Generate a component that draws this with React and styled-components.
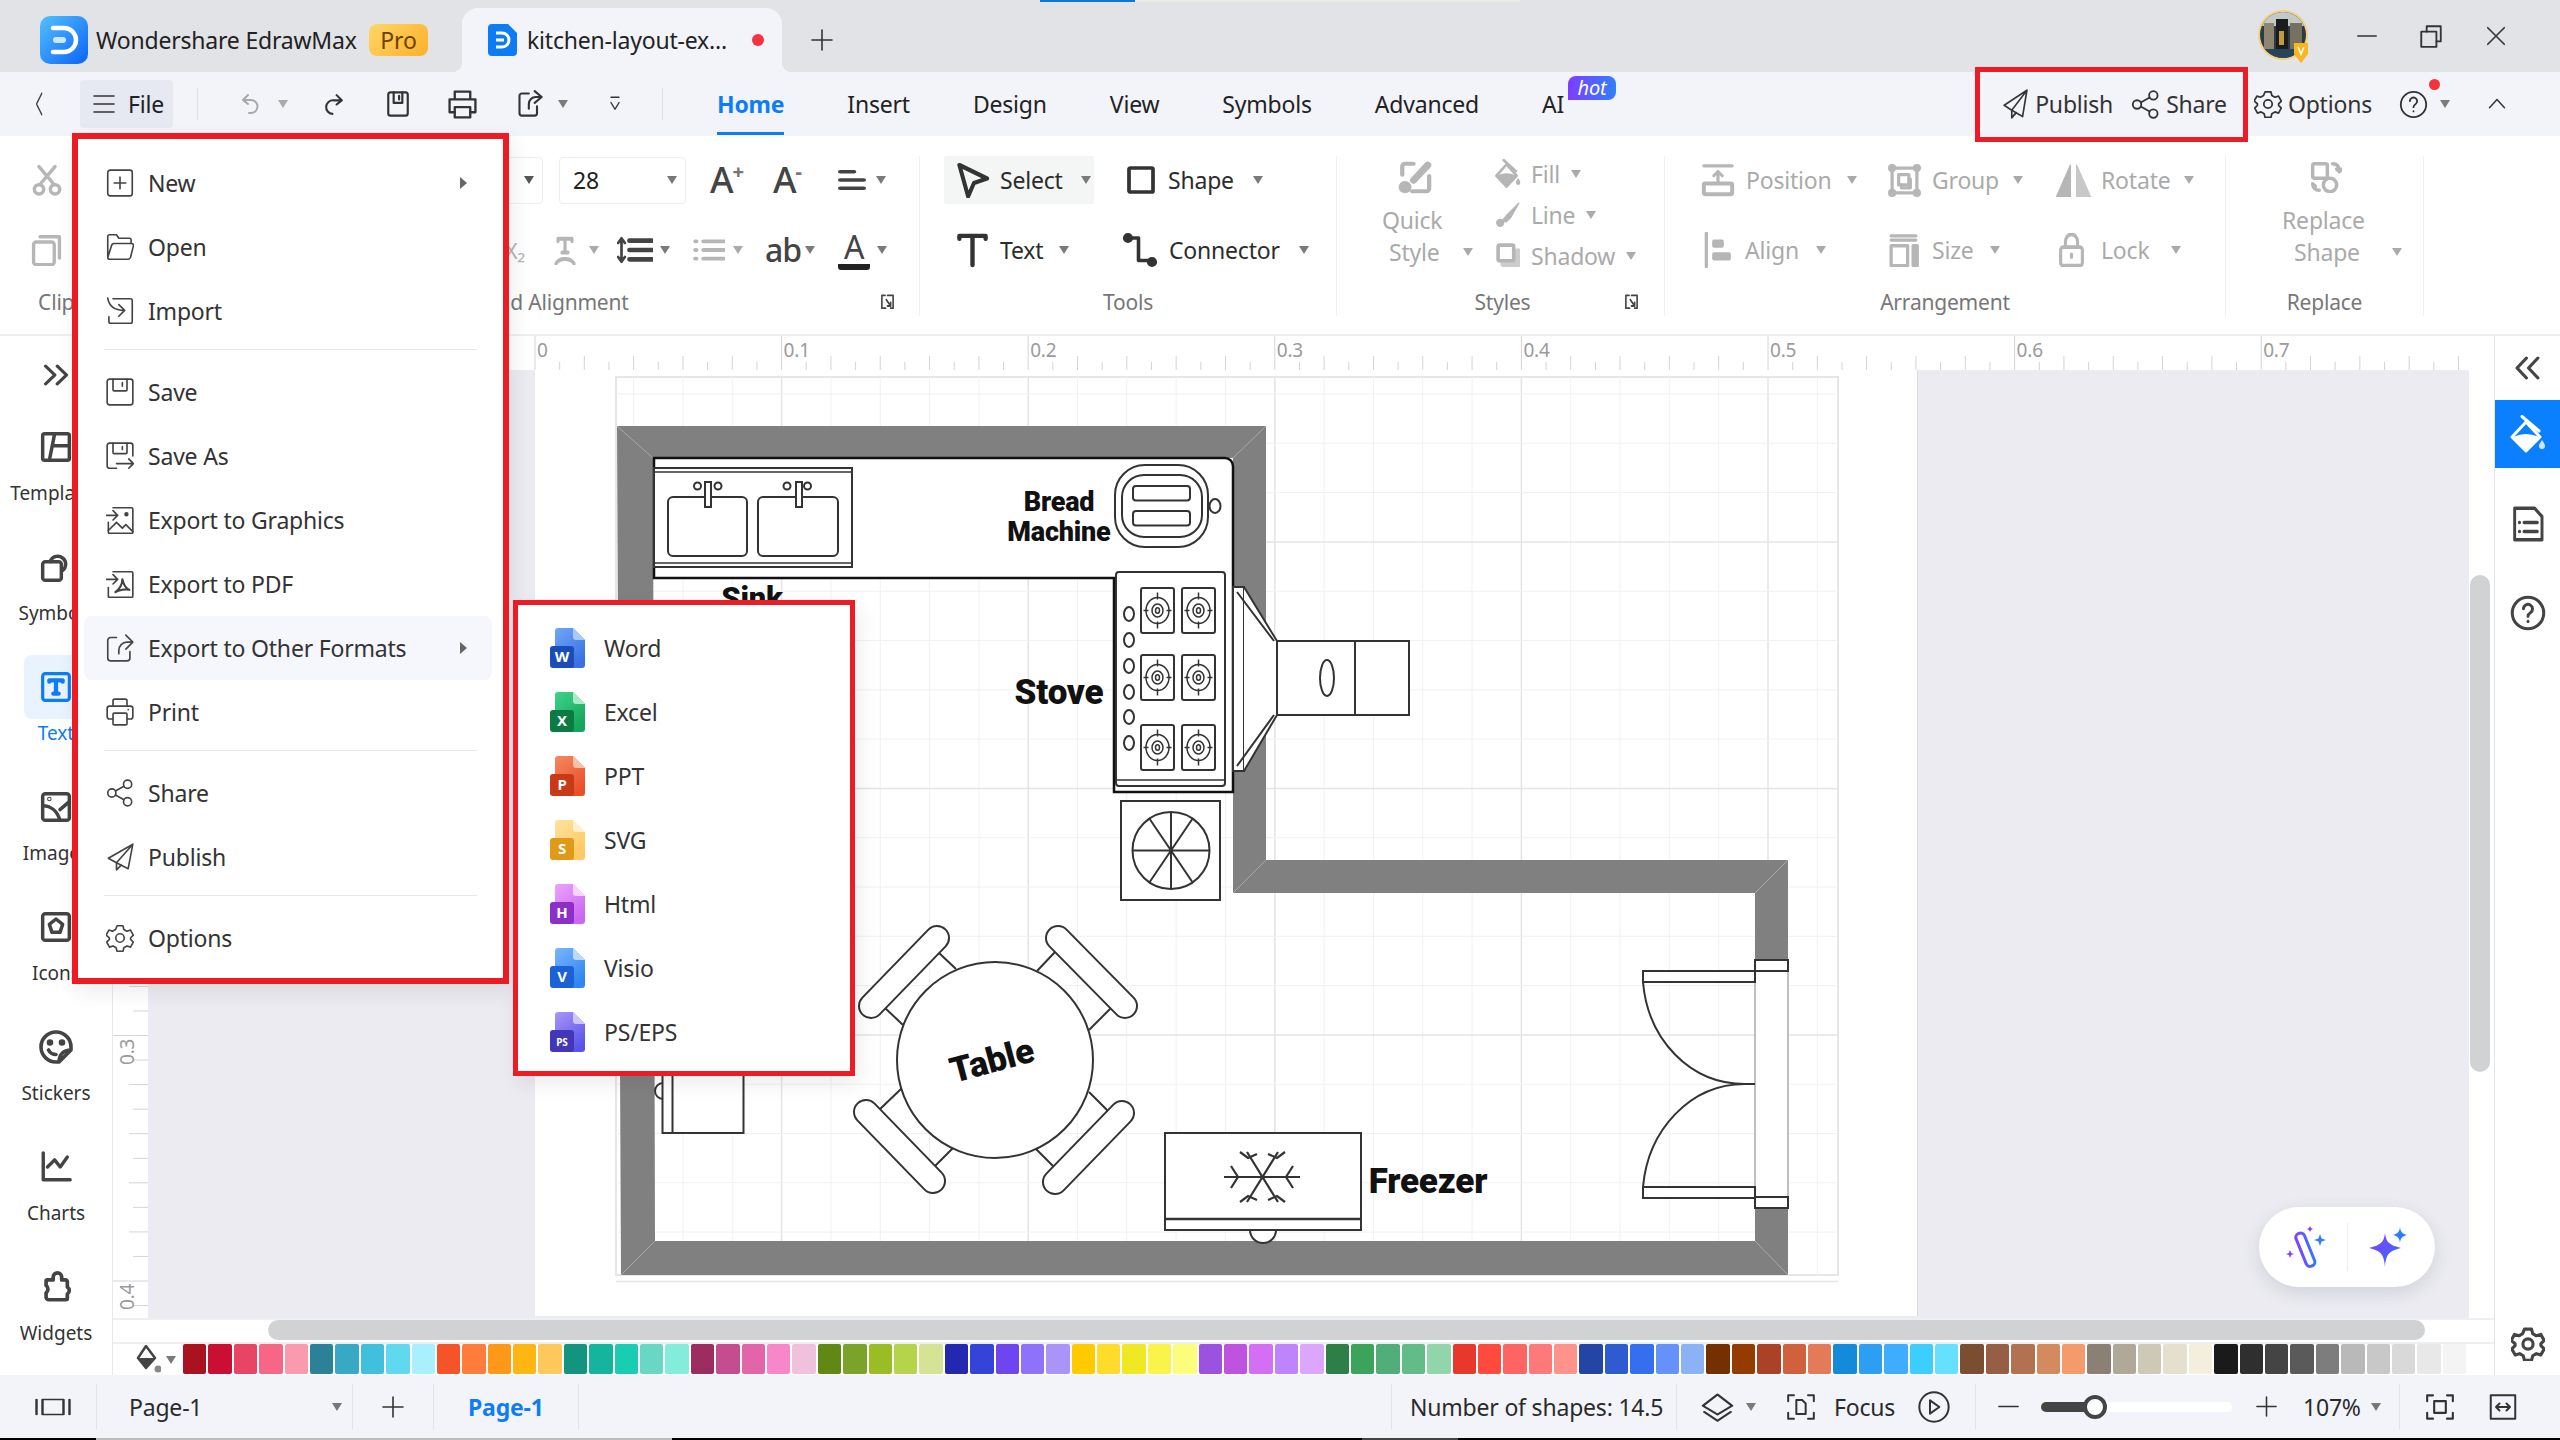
import React from 'react';
import styled, { createGlobalStyle } from 'styled-components';

const Global = createGlobalStyle`
  html, body { margin: 0; padding: 0; background: #fff; }
  body { font-family: "Noto Sans", "Open Sans", sans-serif; color: #333; }
  * { box-sizing: border-box; }
`;

const Root = styled.div`
  position: relative; width: 2560px; height: 1440px; overflow: hidden;
  display: flex; flex-direction: column; font-size: 23px; letter-spacing: -0.2px;
`;

const Svg = styled.svg.attrs({ fill: 'none', stroke: 'currentColor', strokeLinecap: 'round', strokeLinejoin: 'round' })`
  width: ${p => p.$w}px; height: ${p => p.$h || p.$w}px; color: ${p => p.$c || '#333'}; flex: none; display: block;
`;
const mk = (children, vb = '0 0 24 24', dsw = 1.4) => ({ s = 28, h, c, sw }) => (
  <Svg viewBox={vb} $w={s} $h={h} $c={c} strokeWidth={sw || dsw} preserveAspectRatio="none">{children}</Svg>
);

/* ---------- icons ---------- */
const IBack = mk(<path d="M15 3 6 12l9 9" />);
const IBurger = mk(<path d="M2 4h20M2 12h20M2 20h20" />);
const IUndo = mk(<path d="M10 3 5 8l5 4M5 8h8a6 6 0 0 1 0 13h-2" />);
const IRedo = mk(<path d="M14 3l5 5-5 4M19 8h-8a6 6 0 0 0-1 13" />);
const ISaveBar = mk(<g><rect x="3" y="2" width="18" height="20" rx="2" /><path d="M8 2v9h8V2M13 5v3" /></g>);
const IPrint = mk(<g><path d="M6 8V2h12v6M6 18H2V8h20v10h-4" /><rect x="6" y="14" width="12" height="8" /></g>);
const IExport = mk(<g><path d="M11 3H5a2 2 0 0 0-2 2v15a2 2 0 0 0 2 2h11a2 2 0 0 0 2-2v-6" /><path d="M16 1l6 5-6 5M22 6h-5a6 6 0 0 0-6 6v4" /></g>);
const IMore = mk(<path d="M5 3h14M5 10l7 9 7-9" />);
const IPlane = mk(<g><path d="M23 1 2 13l7 4ZM23 1l-4 21-10-5" /><path d="M9 17v6l4-4" /></g>);
const IShare = mk(<g><circle cx="5" cy="12" r="3.5" /><circle cx="18.500" cy="4.500" r="3.500" /><circle cx="18.500" cy="19.500" r="3.500" /><path d="M8.100 10.300 15.400 6.200M8.100 13.700l7.300 4.100" /></g>);
const IGear = mk(<g><circle cx="12" cy="12" r="3.600" /><path d="M9.500 1.500h5l.8 3.200 2.600 1.500 3.100-1 2.400 4.300-2.300 2.300v1.400l2.300 2.300-2.400 4.300-3.100-1-2.600 1.500-.8 3.200h-5l-.8-3.200-2.600-1.500-3.100 1-2.400-4.300 2.300-2.300v-1.400L.1 9.500l2.400-4.300 3.100 1 2.600-1.500Z" /></g>);
const IHelp = mk(<g><circle cx="12" cy="12" r="10.500" /><path d="M9 9.200a3 3 0 1 1 4.600 2.600c-1 .6-1.600 1.200-1.600 2.400M12 17.500v.2" /></g>);
const IUp = mk(<path d="M3 17 12 6l9 11" />);
const IMin = mk(<path d="M2 12h20" />);
const IRestore = mk(<g><rect x="3" y="8" width="14" height="14" /><path d="M8 8V3h13v14h-4" /></g>);
const IX = mk(<path d="M3 3l18 18M21 3 3 21" />);
const IPlus = mk(<path d="M12 2v20M2 12h20" />);
const ITabPlus = IPlus;

const MNew = mk(<g><rect x="1.500" y="1" width="21" height="22" rx="2" /><path d="M12 7v10M7 12h10" /></g>);
const MOpen = mk(<path d="M1.500 21V3A1.500 1.500 0 0 1 3 1.500h6l2 3h9A1.500 1.500 0 0 1 21.500 6v3M1.500 21c0 1 1 1.500 2 1.500H19c1 0 1.500-.5 2-1.500l2.500-10c.2-1-.3-2-1.500-2H7c-1 0-2 .5-2.300 2Z" />);
const MImport = mk(<g><path d="M6 1.500h15A1.500 1.500 0 0 1 22.500 3v18a1.500 1.500 0 0 1-1.500 1.500H4A1.500 1.500 0 0 1 2.500 21v-4" /><path d="M1.500 1c1 6 5 10.500 14 10.500M11 6.500l5 5-5 5" /></g>);
const MSave = mk(<g><rect x="1" y="1" width="22" height="22" rx="2" /><path d="M6 1v9a1 1 0 0 0 1 1h10a1 1 0 0 0 1-1V1M14 4v3" /></g>);
const MSaveAs = mk(<g><path d="M9 22.500H3a2 2 0 0 1-2-2V3a2 2 0 0 1 2-2h18a2 2 0 0 1 2 2v9" /><path d="M6 1v8a1 1 0 0 0 1 1h10a1 1 0 0 0 1-1V1M14 4v2.500M9 18.500h14.500m-4-4 4 4-4 4" /></g>);
const MGraph = mk(<g><path d="M6 1.500h16a1 1 0 0 1 1 1v20a1 1 0 0 1-1 1H3a1 1 0 0 1-1-1V14" /><path d="M2 21l7-7 5 5 3-3 6 6" /><circle cx="17.500" cy="7" r="1.200" fill="currentColor" /><path d="M0 8h10M6 4l4 4-4 4" /></g>);
const MPdf = mk(<g><path d="M6 1.500h16a1 1 0 0 1 1 1v20a1 1 0 0 1-1 1H3a1 1 0 0 1-1-1V15" /><path d="M0 8h10M6 4l4 4-4 4" /><path d="M14 8c0 4-2 8-6 11 3-2 9-3 12-2-3-1-5-5-6-9Z" strokeWidth="1.800" /></g>);
const MOther = mk(<g><path d="M9 3H4a2.500 2.500 0 0 0-2.500 2.500v15A2.500 2.500 0 0 0 4 23h14a2.500 2.500 0 0 0 2.500-2.500V15" /><path d="M17 1l6 6-6 6M23 7h-5a7 7 0 0 0-7 7v3" /></g>);
const MPrint = mk(<g><path d="M6 7V2.500A1.500 1.500 0 0 1 7.500 1h9A1.500 1.500 0 0 1 18 2.500V7M6 18H3a2 2 0 0 1-2-2V9a2 2 0 0 1 2-2h18a2 2 0 0 1 2 2v7a2 2 0 0 1-2 2h-3" /><rect x="6" y="13" width="12" height="10" rx="1" /><path d="M19 10h.1" /></g>);

/* sidebar */
const STemplate = mk(<g><rect x="2" y="2" width="20" height="20" rx="1.500" /><path d="M11 2 7 22M10 11h12" /></g>, '0 0 24 24', 2.600);
const SSymbol = mk(<g><rect x="2" y="8" width="14" height="14" rx="2" /><path d="M8 8V7a6 6 0 1 1 9 7.600" /></g>, '0 0 24 24', 2.600);
const SText = mk(<g><rect x="2" y="2" width="20" height="20" rx="2" /><path d="M7 8V7h10v1M12 7v10M10 17h4" strokeWidth="3.200" /></g>, '0 0 24 24', 2.400);
const SImage = mk(<g><rect x="2" y="2" width="20" height="20" rx="2" /><path d="M2 11c6 0 11 4 13 11M22 8l-7 6" /><circle cx="7" cy="6" r=".4" /></g>, '0 0 24 24', 2.600);
const SIcons = mk(<g><rect x="2" y="2" width="20" height="20" rx="2" /><path d="m12 6 5 4-2 6H9l-2-6Z" /></g>, '0 0 24 24', 2.600);
const SStickers = mk(<g><path d="M14 22H12A10 10 0 1 1 22 12v2Zm0 0c0-5 3-8 8-8" /><circle cx="8" cy="9" r="1" fill="currentColor" /><circle cx="16" cy="9" r="1" fill="currentColor" /><path d="M7 14c1 2 3 3 5 3" /></g>, '0 0 24 24', 2.400);
const SCharts = mk(<path d="M3 2v19h19M6 12l5-5 4 5 5-7" />, '0 0 24 24', 2.400);
const SWidgets = mk(<path d="M10 5a3 3 0 0 1 6 0v2h3a2 2 0 0 1 1 2v3a3 3 0 0 1 0 5v3a1 1 0 0 1-1 1H7a2 2 0 0 1-2-2v-3a3 3 0 0 0 0-5V8a1 1 0 0 1 1-1h4Z" />, '0 0 24 24', 2.600);
const SChevrons = mk(<path d="M3 3l8 9-8 9M13 3l8 9-8 9" />, '0 0 24 24', 2.800);
const SLeftChev = mk(<path d="M11 2 2 12l9 10M22 2l-9 10 9 10" />, '0 0 24 24', 3);
const SDoc = mk(<g><path d="M2 1.500h15l5.500 5.500v15.500H2Z" /><path d="M9 11h10M9 17h10M5.500 11h.2M5.500 17h.2" /></g>, '0 0 24 24', 2.200);
const bucket = (
  <g>
    <path d="M12 1.500 29 16" />
    <path d="M16 7 2 22l14 14 14-14Z" />
    <path d="M4.500 23c7-3 16-3 23 0L16 35Z" fill="currentColor" />
  </g>
);
const SFill = mk(<g>{bucket}<path d="M32 25c-2 3-3 4-3 6a3 3 0 0 0 6 0c0-2-1-3-3-6Z" fill="#cfe4ff" stroke="none" /></g>, '0 0 36 38', 3);

/* ribbon */
const RCut = mk(<g><circle cx="6" cy="19" r="3.500" /><circle cx="18" cy="19" r="3.500" /><path d="M7 15 18 2M17 15 6 2" /></g>, '0 0 24 24', 2.600);
const RCopy = mk(<g><rect x="2" y="6" width="16" height="17" rx="2" /><path d="M7 2h15v16" /></g>, '0 0 24 24', 2.600);
const RAlign = mk(<path d="M2 3h13M2 12h22M2 21h22" />, '0 0 26 24', 4);
const RSpacing = mk(<g><path d="M11 4h20M11 12h20M11 20h20" strokeWidth="4" /><path d="M4 2v20M1 6l3-4 3 4M1 18l3 4 3-4" strokeWidth="2.400" /></g>, '0 0 32 24', 3);
const RList = mk(<path d="M9 4h18M9 12h18M9 20h18M2 4h1M2 12h1M2 20h1" />, '0 0 28 24', 3.600);
const RTArc = mk(<path d="M5 3h14M5 3v2M19 3v2M12 3v11M9 14h6M3 23c3-5 15-5 18 0" />, '0 0 24 24', 3.200);
const RSelect = mk(<path d="M3 2 22 11l-9 3-4 9Z" />, '0 0 24 24', 2.800);
const RShape = mk(<rect x="3" y="3" width="18" height="18" rx="1" />, '0 0 24 24', 2.800);
const RText = mk(<path d="M3 4V2h18v2M12 2v20" />, '0 0 24 24', 3);
const RConnector = mk(<g><path d="M5 4h6v15h8" /><circle cx="4" cy="4" r="2.200" fill="currentColor" /><circle cx="20" cy="20" r="2.200" fill="currentColor" /></g>, '0 0 24 24', 2.400);
const RQuick = mk(<g><path d="M11 2H5a2 2 0 0 0-2 2v6M22 11v9a2 2 0 0 1-2 2H10" strokeWidth="3" /><path d="M21 3 11 14" strokeWidth="5" /><circle cx="5" cy="19" r="4.500" fill="currentColor" stroke="none" /></g>, '0 0 24 24', 2.400);
const RFill = mk(<g>{bucket}<path d="M32 25c-2 3-3 4-3 6a3 3 0 0 0 6 0c0-2-1-3-3-6Z" fill="currentColor" stroke="none" /></g>, '0 0 36 38', 3.600);
const RLine = mk(<g><path d="M23 1 11 13l-4 5 4 1 4-4Z" fill="currentColor" /><circle cx="5" cy="20" r="4" fill="currentColor" stroke="none" /></g>, '0 0 24 24', 1.200);
const RShadow = mk(<g><path d="M8 20h14V8" strokeWidth="6" opacity=".7" /><rect x="3" y="2" width="15" height="15" rx="1.500" fill="#fff" strokeWidth="3.500" /></g>, '0 0 24 24', 2.400);
const RPosition = mk(<g><path d="M2 2h20" /><path d="M12 14V6M9 9l3-3 3 3" /><path d="M12 14v0" /><rect x="2" y="14.500" width="20" height="7.500" rx="1" strokeWidth="2.800" /></g>, '0 0 24 24', 2.200);
const RGroup = mk(<g><rect x="3.500" y="3.500" width="17" height="17" /><rect x="8" y="8" width="7" height="7" /><path d="M10 15v2h6v-6h-1" /><circle cx="3.500" cy="3.500" r="1.700" fill="currentColor" /><circle cx="20.500" cy="3.500" r="1.700" fill="currentColor" /><circle cx="3.500" cy="20.500" r="1.700" fill="currentColor" /><circle cx="20.500" cy="20.500" r="1.700" fill="currentColor" /></g>, '0 0 24 24', 2.200);
const RRotate = mk(<g><path d="M10 2v21H1Z" fill="currentColor" /><path d="M14 2v21h9Z" fill="currentColor" opacity=".75" /></g>, '0 0 24 24', .8);
const RAlignL = mk(<g><path d="M2 1v22" strokeWidth="2.800" /><rect x="7" y="5" width="10" height="5.500" rx="1.500" fill="currentColor" stroke="none" /><rect x="7" y="13.500" width="16" height="5.500" rx="1.500" fill="currentColor" stroke="none" /></g>, '0 0 24 24', 2.200);
const RSize = mk(<g><path d="M3 2h18M3 5h18" /><rect x="3" y="9" width="12" height="14" /><rect x="19" y="9" width="3" height="14" fill="currentColor" /></g>, '0 0 24 24', 2.400);
const RLock = mk(<g><rect x="3" y="10" width="18" height="13" rx="2" /><path d="M7 10V6a5 5 0 0 1 10 0v4M12 15v2" /></g>, '0 0 24 24', 2.600);
const RReplace = mk(<g><rect x="2" y="2" width="11" height="11" rx="1.500" /><circle cx="15" cy="18" r="5" /><path d="M17 2c3 0 5 2 5 6l-2-2M22 8l2-2M7 22c-3 0-5-2-5-5l2 2" /></g>, '0 0 24 24', 2.600);
const RLaunch = mk(<path d="M8 2H3v18h6M12 2h9v18h-4M10 8l7 9M17 12v5h-5" />, '0 0 24 24', 2.400);

/* status */
const TPanel = mk(<g><rect x="5" y="3" width="14" height="18" /><path d="M1 3v18M23 3v18" /></g>, '0 0 24 24', 1.600);
const TLayers = mk(<g><path d="M12 2 22 11l-10 7L2 11Z" /><path d="M3 16l9 7 9-7" /></g>, '0 0 24 24', 1.700);
const TFocus = mk(<g><path d="M6 2H1v5M18 2h5v5M6 22H1v-5M18 22h5v-5" /><path d="M8 6h5l3 3v9H8Z" /></g>, '0 0 24 24', 1.700);
const TPlay = mk(<g><circle cx="12" cy="12" r="11" /><path d="M9 7l7 5-7 5Z" /></g>, '0 0 24 24', 1.500);
const TFit = mk(<g><path d="M6 2H1v5M18 2h5v5M6 22H1v-5M18 22h5v-5" /><rect x="7" y="7" width="10" height="10" /></g>, '0 0 24 24', 1.800);
const TWidth = mk(<g><rect x="1.500" y="2" width="21" height="20" /><path d="M6 12h12M9 9l-3 3 3 3M15 9l3 3-3 3" /></g>, '0 0 24 24', 1.700);

/* ---------- shared ---------- */
const Caret = styled.i`
  display: block; flex: none; width: 0; height: 0; margin-left: ${p => p.$ml || 0}px;
  border-left: 5px solid transparent; border-right: 5px solid transparent;
  border-top: 8px solid ${p => p.$c || '#7a7a7a'};
`;
const MenuArrow = styled.i`
  display: block; flex: none; margin-left: auto; width: 0; height: 0;
  border-top: 6px solid transparent; border-bottom: 6px solid transparent; border-left: 7px solid #666;
`;

/* ---------- title bar ---------- */
const TitleBar = styled.header`
  position: relative; height: 72px; background: #e1e3e6; display: flex; align-items: center; padding: 8px 0 0 40px; flex: none;
`;
const Loader = styled.div`
  position: absolute; top: 0; left: 1040px; width: 95px; height: 2px; background: #0a78d6;
`;
const LoaderRest = styled.div`
  position: absolute; top: 0; left: 1135px; width: 385px; height: 2px; background: #ebebe6;
`;
const AppName = styled.span`margin-left: 8px; width: 257px; flex: none; color: #222; white-space: nowrap;`;
const ProBadge = styled.span`
  margin-left: 16px; width: 59px; height: 32px; border-radius: 8px; display: flex; align-items: center; justify-content: center; flex: none;
  background: linear-gradient(135deg, #ffd667, #ffb02a); color: #6b4300;
`;
const ActiveTab = styled.div`
  position: relative; margin-left: 34px; width: 320px; height: 64px; align-self: flex-end; background: #f2f4fa; flex: none;
  border-radius: 16px 16px 0 0; display: flex; align-items: center; padding-left: 26px;
  &::before, &::after { content: ''; position: absolute; bottom: 0; width: 10px; height: 10px; }
  &::before { left: -10px; background: radial-gradient(circle at 0 0, transparent 10px, #f2f4fa 10.5px); }
  &::after { right: -10px; background: radial-gradient(circle at 100% 0, transparent 10px, #f2f4fa 10.5px); }
`;
const TabName = styled.span`margin-left: 10px; width: 225px; color: #222; white-space: nowrap;`;
const TabDot = styled.span`width: 12px; height: 12px; border-radius: 50%; background: #f5333f;`;
const NewTab = styled.div`margin-left: 28px; display: flex; align-items: center;`;
const WindowTools = styled.div`margin-left: auto; display: flex; align-items: center; padding-right: 53px; margin-top: -8px;`;
const WinBtn = styled.div`margin-left: ${p => p.$ml}px; display: flex;`;

const LogoMark = () => (
  <svg width="48" height="48" viewBox="0 0 48 48" style={{ flex: 'none' }}>
    <defs><linearGradient id="lg" x1="0" y1="0" x2="1" y2="1"><stop offset="0" stopColor="#53c0ff" /><stop offset="1" stopColor="#0b63f6" /></linearGradient></defs>
    <rect width="48" height="48" rx="10" fill="url(#lg)" />
    <path d="M13 12h11a12 12 0 0 1 0 24H13" fill="none" stroke="#fff" strokeWidth="4.500" strokeLinecap="round" />
    <rect x="13" y="21" width="13" height="6" rx="3" fill="#cfe6ff" />
  </svg>
);
const TabLogo = () => (
  <svg width="29" height="32" viewBox="0 0 29 32" style={{ flex: 'none' }}>
    <path d="M4 0h16l9 9v19a4 4 0 0 1-4 4H4a4 4 0 0 1-4-4V4a4 4 0 0 1 4-4Z" fill="#0d7bf4" />
    <path d="M8 9h6a7 7 0 0 1 0 14H8" fill="none" stroke="#fff" strokeWidth="3" />
    <rect x="8" y="14.500" width="8" height="3" fill="#fff" />
  </svg>
);
const Avatar = () => (
  <svg width="52" height="54" viewBox="0 0 52 54" style={{ flex: 'none' }}>
    <defs><clipPath id="av"><circle cx="25" cy="26" r="23" /></clipPath></defs>
    <circle cx="25" cy="26" r="25" fill="#f5cf7a" />
    <g clipPath="url(#av)">
      <rect width="52" height="54" fill="#2c3a44" />
      <rect x="0" y="3" width="50" height="14" fill="#c3c8c8" />
      <rect x="6" y="14" width="10" height="26" fill="#8f8672" />
      <rect x="32" y="14" width="12" height="26" fill="#75705f" />
      <rect x="18" y="10" width="12" height="32" fill="#1b1d1c" />
      <rect x="21" y="22" width="5" height="14" fill="#c79b3d" />
      <rect x="0" y="40" width="50" height="12" fill="#29445a" />
    </g>
    <path d="M36 34h14v11l-7 9-7-9Z" fill="#f9b61e" />
    <path d="M40 38l3 7 3-7" fill="none" stroke="#fff" strokeWidth="1.600" />
  </svg>
);

/* ---------- menu bar ---------- */
const MenuBar = styled.nav`
  position: relative; height: 64px; background: #f2f4fa; display: flex; align-items: center; flex: none;
`;
const BarIcon = styled.div`display: flex; align-items: center; margin-left: ${p => p.$ml || 0}px;`;
const FileBtn = styled.div`
  margin-left: 33px; width: 93px; height: 48px; border-radius: 4px; background: #e6e9f2;
  display: flex; align-items: center; padding-left: 12px; gap: 12px; color: #222;
`;
const VSep = styled.span`
  flex: none; width: 1px; height: ${p => p.$h || 32}px; background: #dcdfe8; margin-left: ${p => p.$ml || 0}px;
`;
const Tabs = styled.div`display: flex; gap: 63px; margin-left: 54px; height: 100%;`;
const TabItem = styled.div`
  position: relative; height: 100%; display: flex; align-items: center; color: ${p => p.$on ? '#0e7cf6' : '#222'};
  font-weight: ${p => p.$on ? 700 : 400};
  ${p => p.$on && `&::after { content: ''; position: absolute; left: 0; right: 0; bottom: 1px; height: 3px; background: #0e7cf6; }`}
`;
const HotBadge = styled.span`
  position: absolute; left: 26px; top: 4px; width: 48px; height: 24px; border-radius: 8px 8px 8px 0;
  background: linear-gradient(90deg, #7e3cff, #2f80ff); color: #fff; font-size: 20px; font-style: italic;
  display: flex; align-items: center; justify-content: center; line-height: 1;
`;
const MenuRight = styled.div`margin-left: auto; display: flex; align-items: center; padding-right: 53px; color: #333;`;
const RightTool = styled.div`display: flex; align-items: center; gap: ${p => p.$gap || 6}px; margin-left: ${p => p.$ml || 0}px;`;
const HelpWrap = styled.div`position: relative; display: flex; align-items: center; gap: 12px; margin-left: 27px;`;
const HelpDot = styled.span`position: absolute; left: 30px; top: -11px; width: 11px; height: 11px; border-radius: 50%; background: #f5333f;`;

const RedBox = styled.div`
  position: absolute; border: 5px solid #ed1c24; left: ${p => p.$l}px; top: ${p => p.$t}px; width: ${p => p.$w}px; height: ${p => p.$h}px;
  pointer-events: none;
`;

/* ---------- ribbon ---------- */
const Ribbon = styled.section`
  height: 200px; background: #fff; display: flex; padding-top: 20px; border-bottom: 2px solid #eeeff2; flex: none;
`;
const Group = styled.div`
  width: ${p => p.$w}px; height: 160px; border-right: 1px solid #eff0f3; flex: none; display: flex; flex-direction: column;
`;
const GroupBody = styled.div`
  height: 126px; padding-left: ${p => p.$pl || 0}px; display: ${p => p.$grid ? 'grid' : 'block'};
  grid-template-columns: ${p => p.$cols || 'none'}; grid-auto-rows: 48px; row-gap: 22px; align-items: center;
  column-gap: ${p => p.$cg || 0}px;
`;
const GroupFoot = styled.div`
  flex: 1; display: grid; grid-template-columns: 1fr auto 1fr; align-items: center; color: #777; font-size: 21px;
  padding: 6px ${p => p.$pr || 0}px 0 ${p => p.$pl || 0}px;
`;
const FootLabel = styled.span`grid-column: 2; white-space: nowrap; line-height: 1;`;
const FootAction = styled.span`grid-column: 3; justify-self: end; display: flex;`;
const Cell = styled.div`
  display: flex; align-items: center; height: 48px; gap: ${p => p.$gap || 11}px; padding-left: ${p => p.$pl || 0}px;
  color: ${p => p.$off ? '#aaa' : '#2c2c2c'}; background: ${p => p.$bg || 'transparent'}; border-radius: 3px;
  white-space: nowrap;
`;
const FontRow = styled.div`display: flex; align-items: center; height: 48px; margin-bottom: 22px;`;
const Slot = styled.div`display: flex; align-items: center; flex: none; margin-left: ${p => p.$ml || 0}px;`;
const FieldBox = styled.div`
  width: ${p => p.$w}px; height: 47px; flex: none; margin-left: ${p => p.$ml || 0}px; border: 1px solid #eceef1; border-radius: 4px;
  display: flex; align-items: center; padding: 0 8px 0 13px; justify-content: space-between; color: #222;
`;
const BumpA = styled.span`font-size: 36px; font-weight: 500; line-height: 1; color: #444; display: flex; width: 32px;`;
const BumpSign = styled.span`font-size: 20px; line-height: 1; font-weight: 800; color: #777; margin-left: -1px;`;
const AbText = styled.span`font-size: 32px; font-weight: 500; line-height: 1; letter-spacing: -1px; width: 33px; color: #444;`;
const ColorA = styled.span`font-size: 32px; line-height: 34px; width: 32px; text-align: center; border-bottom: 6px solid #222; border-radius: 3px; color: #444;`;
const SubX = styled.span`font-size: 22px; color: #b5b5b5; width: 50px; text-align: right; margin-left: -35px;`;
const QuickCol = styled.div`width: ${p => p.$w || 158}px; padding-left: ${p => p.$pl ?? 33}px; padding-top: 5px; height: 126px; flex: none; display: flex; flex-direction: column; color: #aaa;`;
const QuickIcon = styled.div`padding-left: ${p => p.$pl || 28}px; margin-bottom: 6px; height: 37px;`;
const QuickLine = styled.div`
  display: flex; align-items: center; line-height: 32px; padding-left: ${p => p.$pl || 0}px; gap: ${p => p.$gap || 0}px;
`;
const StyleRow = styled.div`display: flex; align-items: center; height: 41px; gap: 11px; color: #aaa;`;
const StyleIcons = styled.div`width: 25px; display: flex; justify-content: center;`;
const StyleColumn = styled.div`margin-top: -3px;`;
const StylesBody = styled.div`height: 126px; display: flex;`;

/* ---------- main ---------- */
const Main = styled.main`flex: 1; display: flex; min-height: 0;`;
const SideBar = styled.aside`width: 113px; flex: none; background: #fff; border-right: 1px solid #e8e8ec; display: flex; flex-direction: column;`;
const SideTop = styled.div`height: 80px; display: flex; align-items: center; justify-content: center; padding-bottom: 2px;`;
const SideItem = styled.div`
  height: 120px; display: flex; flex-direction: column; align-items: center; flex: none; font-size: 19px; letter-spacing: 0;
  color: ${p => p.$on ? '#0e7cf6' : '#333'};
`;
const SideTile = styled.div`
  width: 64px; height: 64px; border-radius: 8px; background: ${p => p.$on ? '#e9f3fe' : 'transparent'};
  display: flex; align-items: center; justify-content: center;
`;
const SideLabel = styled.span`line-height: 28px; white-space: nowrap;`;

const Center = styled.div`flex: 1; min-width: 0; display: flex; flex-direction: column;`;
const TopRuler = styled.div`height: 34px; flex: none; background: #fff; display: flex; padding-left: 35px;`;
const CanvasRow = styled.div`height: 948px; flex: none; display: flex; background: #ebebf1;`;
const LeftRuler = styled.div`width: 35px; flex: none; background: #fff;`;
const GrayPad = styled.div`width: ${p => p.$w}px; flex: none; position: relative;`;
const PageBox = styled.div`width: 1383px; height: 946px; flex: none; background: #fff; border-right: 1px solid #dcdce2;`;
const VScrollTrack = styled.div`width: 25px; flex: none; background: #fff; padding: 205px 4px 0 1px;`;
const VThumb = styled.div`height: 497px; border-radius: 10px; background: #d1d2d4;`;
const HScrollTrack = styled.div`height: 26px; flex: none; background: #fff; border-top: 2px solid #eeeff2; border-bottom: 2px solid #eeeff2; padding: 0 69px 0 155px;`;
const HThumb = styled.div`height: 20px; border-radius: 10px; background: #d1d2d4;`;
const ColorStrip = styled.div`flex: 1; background: #fff; display: flex; align-items: stretch; padding-left: 23px;`;
const PaintBtn = styled.div`width: 47px; flex: none; display: flex; align-items: center; gap: 5px;`;
const Swatches = styled.div`display: flex; gap: 2px; height: 30px;`;
const Swatch = styled.span`width: 23.4px; flex: none; border-radius: 2px; background: ${p => p.$c};`;

const RightPanel = styled.aside`width: 66px; flex: none; background: #fff; border-left: 1px solid #e6e6ea; display: flex; flex-direction: column; align-items: center;`;
const RightIcon = styled.div`
  width: 100%; height: ${p => p.$h}px; margin-top: ${p => p.$mt || 0}px; display: flex; align-items: center; justify-content: center; flex: none;
  background: ${p => p.$bg || 'transparent'};
`;

const FloatPill = styled.div`
  position: absolute; left: 341px; bottom: 31px; width: 176px; height: 80px; border-radius: 40px; background: #fff;
  box-shadow: 0 6px 18px rgba(60, 60, 90, .14); display: flex; align-items: center; justify-content: center; gap: 21px;
`;
const PillSep = styled.span`width: 1px; height: 48px; background: #eeeef2;`;

/* ---------- status ---------- */
const StatusBar = styled.footer`height: 63px; flex: none; background: #f2f4fa; display: flex; align-items: center; color: #2a2a2a;`;
const StatusCell = styled.div`
  width: ${p => p.$w ? p.$w + 'px' : 'auto'}; height: 46px; display: flex; align-items: center; flex: none;
  padding-left: ${p => p.$pl || 0}px; gap: ${p => p.$gap || 0}px; border-right: ${p => p.$bare ? 'none' : '1px solid #e1e3ea'};
  border-left: ${p => p.$lb ? '1px solid #e1e3ea' : 'none'};
  justify-content: ${p => p.$jc || 'flex-start'}; color: ${p => p.$c || 'inherit'}; font-weight: ${p => p.$bold ? 700 : 400};
`;
const StatusGrow = styled.div`flex: 1;`;
const SliderTrack = styled.div`position: relative; width: 191px; height: 10px; border-radius: 5px; background: #fff; margin-left: 21px; flex: none;`;
const SliderFill = styled.div`height: 100%; border-radius: 5px; background: #444;`;
const SliderKnob = styled.div`position: absolute; top: -7px; width: 24px; height: 24px; border-radius: 50%; background: #fff; border: 4px solid #444;`;
const TaskStrip = styled.div`height: 2px; flex: none; background: linear-gradient(90deg, #000 0 96px, #bdbdbd 96px 672px, #000 672px 1362px, #444 1362px 1458px, #000 1458px);`;

/* ---------- overlay menus ---------- */
const FileMenu = styled.div`
  position: absolute; left: 72px; top: 133px; width: 437px; height: 851px; background: #fff; border: 6px solid #ed1c24;
  padding: 12px 11px 0 6px; box-shadow: 4px 8px 20px rgba(0,0,0,.08);
`;
const SubMenu = styled.div`
  position: absolute; left: 513px; top: 600px; width: 342px; height: 476px; background: #fff; border: 5px solid #ed1c24;
  padding: 11px 6px 0; box-shadow: 4px 8px 20px rgba(0,0,0,.08);
`;
const MenuRow = styled.div`
  height: 64px; display: flex; align-items: center; padding: 0 ${p => p.$pr || 13}px 0 22px; gap: 14px; border-radius: 8px;
  background: ${p => p.$on ? '#f5f7fc' : 'transparent'}; color: #333;
`;
const SubRow = styled.div`height: 64px; display: flex; align-items: center; padding-left: 26px; gap: 18px; color: #333;`;
const MenuSep = styled.div`height: 17px; padding: 6px 15px 0 20px;`;
const MenuSepLine = styled.div`height: 1px; background: #e9e9ec;`;

/* ---------- data ---------- */
const colors = ['#ab1220', '#c90f33', '#e84565', '#f76685', '#f99aae', '#2a8198', '#38a9c4', '#40c0dd', '#60d9ef', '#a9effd', '#f45428', '#ff7c3a', '#ff9718', '#ffb612', '#ffc85c', '#12947f', '#15b59d', '#19cdb0', '#68d8c5', '#84ecda', '#9d2c61', '#c54c8e', '#e165a8', '#f887ca', '#f0c0dc', '#5f8814', '#7ba32a', '#9bbd24', '#b5d34b', '#d4e494', '#2228b0', '#3544d8', '#6f45f0', '#8f72fa', '#aa94f8', '#ffcb00', '#ffdc2b', '#f1e824', '#faf44a', '#fdfd7c', '#9b52de', '#c052e0', '#d36ef5', '#bf84fb', '#dba6fc', '#2e7e47', '#3ca35a', '#52ae78', '#62bc88', '#90d6aa', '#e8372b', '#ff4a3d', '#fd6464', '#fe7a7a', '#ff928a', '#2444a6', '#2f5bd0', '#356eee', '#6591fb', '#8bb1f6', '#743000', '#963b00', '#ab4228', '#d1603e', '#e47a58', '#148ada', '#2c9ff2', '#3fadff', '#3bceff', '#66e0ff', '#7b4d31', '#965e44', '#b27150', '#d48a5e', '#f59a6b', '#8b8073', '#b0a997', '#cdc9b5', '#e5dfce', '#f4eedd', '#1a1a1a', '#2f2f2f', '#444444', '#5a5a5a', '#7d7d7d', '#b9b9b9', '#c8c8c8', '#d9d9d9', '#e8e8e8', '#f4f4f4', '#ffffff'];

const tabs = ['Home', 'Insert', 'Design', 'View', 'Symbols', 'Advanced'];

const subs = [
  ['Word', 'W', '#6fa8f6', '#3b70e2', '#1b4dba', '#a9c9fa'],
  ['Excel', 'X', '#3fd48a', '#15a55c', '#0b7a43', '#aee8cb'],
  ['PPT', 'P', '#f58a60', '#ea4f2a', '#c83a17', '#f9c0a8'],
  ['SVG', 'S', '#ffe3a0', '#ffc860', '#e09a18', '#fff0cc'],
  ['Html', 'H', '#eba4fb', '#cc66f4', '#8b2fc7', '#f5d4fd'],
  ['Visio', 'V', '#7cb5ff', '#2d86f2', '#1b62d6', '#bcd9ff'],
  ['PS/EPS', 'PS', '#a996fa', '#5a55ea', '#4336b9', '#d0c6fd'],
];

const FileIcon = ({ id, letter, a, b, badge, fold }) => (
  <svg width="36" height="40" viewBox="0 0 36 40" style={{ flex: 'none' }}>
    <defs><linearGradient id={id} x1="0" y1="0" x2="0.6" y2="1"><stop offset="0" stopColor={a} /><stop offset="1" stopColor={b} /></linearGradient></defs>
    <path d="M5 3a3 3 0 0 1 3-3h15l12 12v25a3 3 0 0 1-3 3H8a3 3 0 0 1-3-3Z" fill={`url(#${id})`} />
    <path d="M23 0l12 12H26a3 3 0 0 1-3-3Z" fill={fold} />
    <rect x="0" y="18" width="24" height="22" rx="3" fill={badge} />
    <text x="12" y="34" textAnchor="middle" fontFamily="'Noto Sans', sans-serif" fontWeight="700" fontSize={letter.length > 1 ? 10 : 15} fill="#fff">{letter}</text>
  </svg>
);

const sx = 535;
const TopTicks = () => {
  const items = [];
  for (let i = 0; i * 24.66 + sx < 2469; i++) {
    const x = sx + i * 24.66;
    const major = i % 10 === 0;
    items.push(<line key={i} x1={x} x2={x} y1={major ? 336 : i % 2 ? 362 : 356} y2="370" stroke="#d4d4d8" strokeWidth="1" />);
    if (major) items.push(<text key={'t' + i} x={x + 2} y="357" fontFamily="'Noto Sans', sans-serif" fontSize="19" fill="#9a9a9a">{i === 0 ? '0' : (i / 100).toFixed(1)}</text>);
  }
  return <svg width="2346" height="34" viewBox="148 336 2346 34" style={{ display: 'block' }}>{items}</svg>;
};
const LeftTicks = () => {
  const items = [];
  for (let i = 0; i < 40; i++) {
    const y = 1281 - i * 24.55;
    const major = i % 10 === 0;
    items.push(<line key={i} y1={y} y2={y} x1={major ? 112 : i % 2 ? 133 : 129} x2="148" stroke="#d4d4d8" strokeWidth="1" />);
  }
  for (let i = 1; i < 6; i++) {
    const y = 1281 + 24.55 * i;
    if (y < 1318) items.push(<line key={'d' + i} y1={y} y2={y} x1={i % 2 ? 133 : 129} x2="148" stroke="#d4d4d8" strokeWidth="1" />);
  }
  [['0.4', 1283], ['0.3', 1038]].forEach(([t, y]) => {
    items.push(<text key={t} transform={`translate(134 ${y + 27}) rotate(-90)`} fontFamily="'Noto Sans', sans-serif" fontSize="19" fill="#9a9a9a">{t}</text>);
  });
  return <svg width="35" height="948" viewBox="113 370 35 948" style={{ display: 'block' }}>{items}</svg>;
};

const Burner = ({ x, y }) => {
  const cx = x + 16.5, cy = y + 22.5;
  return (
    <g strokeWidth="1.500">
      <rect x={x} y={y} width="33" height="45" rx="2" fill="#fff" strokeWidth="2" />
      <ellipse cx={cx} cy={cy} rx="11.500" ry="13" />
      <ellipse cx={cx} cy={cy} rx="5.500" ry="6.500" />
      <ellipse cx={cx} cy={cy} rx="2" ry="2.800" />
      <path d={`M${cx} ${cy - 18}v7M${cx} ${cy + 11}v7M${cx - 14} ${cy}h5M${cx + 9} ${cy}h5`} />
    </g>
  );
};

const Chair = ({ a, b, l1, l2 }) => {
  const dx = b[0] - a[0], dy = b[1] - a[1];
  const len = Math.hypot(dx, dy);
  const ang = Math.atan2(dy, dx) * 180 / Math.PI;
  return (
    <g>
      <path d={`M${l1[0]} ${l1[1]}L${l1[2]} ${l1[3]}M${l2[0]} ${l2[1]}L${l2[2]} ${l2[3]}`} />
      <rect x={-12} y={-12} width={len + 24} height="24" rx="12" transform={`translate(${a[0]} ${a[1]}) rotate(${ang})`} fill="#fff" />
    </g>
  );
};

const planFont = { fontFamily: "Roboto, 'Liberation Sans', sans-serif", fontWeight: 900, fill: '#111', stroke: 'none' };

const FloorPlan = () => {
  const vLines = [], hLines = [];
  for (let i = 2; i < 27; i++) {
    const x = 535 + i * 49.32;
    if (x > 616 && x < 1838) vLines.push(<line key={i} x1={x} x2={x} y1="377" y2="1275" stroke={i % 5 === 0 ? '#e4e4e4' : '#f1f1f1'} strokeWidth={i % 5 === 0 ? 1.500 : 1} />);
  }
  for (let i = 0; i < 19; i++) {
    const y = 394 + i * 49.3;
    hLines.push(<line key={i} y1={y} y2={y} x1="616" x2="1838" stroke={(i - 13) % 5 === 0 ? '#e4e4e4' : '#f1f1f1'} strokeWidth={(i - 13) % 5 === 0 ? 1.500 : 1} />);
  }
  const knobs = [614, 640, 666, 692, 717, 743];
  return (
    <svg width="1383" height="946" viewBox="535 370 1383 946" style={{ display: 'block' }}>
      <rect x="616" y="377" width="1222" height="898" fill="#fff" stroke="#dedede" strokeWidth="1.500" />
      {vLines}{hLines}
      {/* walls */}
      <path d="M617 426H1266V860H1788V960H1755V893H1233V458H653L655 1241H1755V1208H1788V1275H621Z" fill="#808080" />
      <path d="M617 426l36 32M1266 426l-33 32M1266 860l-33 33M1788 860l-33 33M1755 1241l33 34M655 1241l-34 34" stroke="#a8a8a8" strokeWidth="1" fill="none" />
      {/* counter */}
      <path d="M654 458H1225a8 8 0 0 1 8 8V792H1114V578H654Z" fill="#fff" stroke="#111" strokeWidth="2.500" />
      <g fill="#fff" stroke="#333" strokeWidth="2">
        {/* sink */}
        <rect x="654" y="468" width="198" height="99" />
        <path d="M654 472H852M654 563H852" fill="none" strokeWidth="1.500" />
        <rect x="668" y="497" width="79" height="59" rx="5" />
        <rect x="758" y="497" width="80" height="59" rx="5" />
        <circle cx="697.500" cy="486" r="3.500" /><circle cx="718" cy="486" r="3.500" />
        <rect x="705" y="482" width="6" height="25" />
        <circle cx="787" cy="486" r="3.500" /><circle cx="807.500" cy="486" r="3.500" />
        <rect x="796" y="482" width="6" height="25" />
        {/* bread machine */}
        <rect x="1115" y="465" width="93" height="82" rx="30" />
        <rect x="1122" y="475" width="80" height="62" rx="22" />
        <rect x="1133" y="486" width="57" height="14.500" rx="3" />
        <rect x="1133" y="511" width="57" height="14.500" rx="3" />
        <ellipse cx="1215" cy="506" rx="5.500" ry="7" />
        {/* stove */}
        <rect x="1116" y="572" width="109" height="214" rx="3" />
        <path d="M1116 780H1225" fill="none" strokeWidth="1.500" />
        <Burner x={1141} y={588} /><Burner x={1182} y={588} />
        <Burner x={1141} y={655} /><Burner x={1182} y={655} />
        <Burner x={1141} y={725} /><Burner x={1182} y={725} />
        {knobs.map(y => <ellipse key={y} cx="1129" cy={y} rx="5" ry="7" />)}
        {/* hood */}
        <rect x="1233" y="587" width="11" height="184" />
        <path d="M1244 587 1277 641V715L1244 771Z" stroke="none" />
        <path d="M1244 587 1277 641M1237 592 1274 641M1244 771 1277 715M1237 766 1274 715" fill="none" />
        <rect x="1277" y="641" width="132" height="74" />
        <path d="M1355 641v74" fill="none" />
        <ellipse cx="1327" cy="678" rx="7" ry="18" />
        {/* oven */}
        <rect x="1121" y="801" width="99" height="99" />
        <circle cx="1171" cy="850.500" r="38.500" />
        <path d="M1171 812v77M1132.500 850.500h77M1149 818l44 65M1193 818l-44 65" fill="none" />
        {/* freezer */}
        <rect x="1165" y="1133" width="196" height="97" />
        <path d="M1165 1219H1361" fill="none" strokeWidth="2.500" />
        <path d="M1250 1230a13 13 0 0 0 26 0Z" />
        {/* side rect below menu */}
        <circle cx="663" cy="1091" r="8" />
        <rect x="662.500" y="1040" width="81" height="93" />
        <path d="M672.500 1040v93" fill="none" />
      </g>
      {/* snowflake */}
      <g stroke="#333" strokeWidth="2.200" fill="none">
        <path d="M1224 1177h76M1247 1152l31 50M1278 1152l-31 50" />
        <path d="M1231 1166l7 11-7 11M1293 1166l-7 11 7 11M1240 1152l8 6 9-4M1285 1152l-8 6-9-4M1240 1202l8-6 9 4M1285 1202l-8-6-9 4" />
      </g>
      {/* door */}
      <rect x="1755" y="971" width="33" height="226" fill="#fff" stroke="#aaa" strokeWidth="1.500" />
      <g fill="#fff" stroke="#333" strokeWidth="2">
        <rect x="1755" y="960" width="33" height="11" />
        <rect x="1755" y="1197" width="33" height="11" />
        <rect x="1643" y="971" width="112" height="11" />
        <rect x="1643" y="1187" width="112" height="11" />
        <path d="M1643 982C1648 1040 1690 1084 1745 1084H1755M1643 1187C1648 1130 1690 1084 1745 1084" fill="none" />
      </g>
      {/* table */}
      <g fill="none" stroke="#333" strokeWidth="2">
        <Chair a={[937, 938]} b={[871, 1006]} l1={[938, 952, 956, 969]} l2={[884, 1007, 903, 1025]} />
        <Chair a={[1058, 938]} b={[1125, 1006]} l1={[1055, 952, 1037, 971]} l2={[1112, 1007, 1089, 1030]} />
        <Chair a={[866, 1112]} b={[933, 1181]} l1={[902, 1088, 878, 1111]} l2={[953, 1148, 935, 1166]} />
        <Chair a={[1122, 1113]} b={[1055, 1182]} l1={[1089, 1092, 1110, 1113]} l2={[1035, 1148, 1054, 1167]} />
        <circle cx="995" cy="1060" r="98" fill="#fff" />
      </g>
      <text x="752" y="609" textAnchor="middle" fontSize="31" style={planFont}>Sink</text>
      <text x="1059" y="511" textAnchor="middle" fontSize="27" style={planFont}>Bread</text>
      <text x="1059" y="541" textAnchor="middle" fontSize="27" style={planFont}>Machine</text>
      <text x="1059" y="704" textAnchor="middle" fontSize="35" style={planFont}>Stove</text>
      <text x="1428" y="1193" textAnchor="middle" fontSize="35" style={planFont}>Freezer</text>
      <text transform="translate(995 1072) rotate(-15)" textAnchor="middle" fontSize="35" style={planFont}>Table</text>
    </svg>
  );
};

const Wand = () => (
  <svg width="40" height="42" viewBox="0 0 40 42" style={{ flex: 'none' }}>
    <defs><linearGradient id="wd" x1="0" y1="0" x2="1" y2="1"><stop offset="0" stopColor="#8a3cff" /><stop offset="1" stopColor="#2d7bff" /></linearGradient></defs>
    <g transform="rotate(-22 20 24)">
      <rect x="15" y="6" width="9" height="35" rx="4" fill="none" stroke="url(#wd)" strokeWidth="3" />
      <path d="M15 15h9" stroke="url(#wd)" strokeWidth="3" />
    </g>
    <path d="M34 8l1.500 4.500L40 14l-4.500 1.500L34 20l-1.500-4.500L28 14l4.500-1.500Z" fill="#2d7bff" />
    <path d="M24 0l1 2 2 1-2 1-1 2-1-2-2-1 2-1Z" fill="#8a3cff" />
    <path d="M4 24l1.200 3L8 28l-2.800 1L4 32l-1.200-3L0 28l2.800-1Z" fill="#8a3cff" />
  </svg>
);
const Sparkle = () => (
  <svg width="40" height="40" viewBox="0 0 40 40" style={{ flex: 'none' }}>
    <defs><linearGradient id="sp" x1="0" y1="0" x2="1" y2="1"><stop offset="0" stopColor="#8b3cff" /><stop offset="1" stopColor="#2d70ff" /></linearGradient></defs>
    <path d="M16 6c1 9 4 12 16 15-12 3-15 6-16 19-1-13-4-16-16-19 12-3 15-6 16-15Z" fill="url(#sp)" />
    <path d="M31 0c.6 5 2 6.500 7 8-5 1.500-6.400 3-7 8-.6-5-2-6.500-7-8 5-1.500 6.400-3 7-8Z" fill="#2d7bff" />
  </svg>
);

const PaintIcon = () => (
  <svg width="25" height="30" viewBox="0 0 25 30" style={{ flex: 'none' }}>
    <path d="M10 1 2 13l8 10 9-10Z" fill="none" stroke="#444" strokeWidth="2.500" strokeLinejoin="round" />
    <path d="M3 13h15l-8 10Z" fill="#444" />
    <circle cx="22" cy="24" r="3.500" fill="#888" />
  </svg>
);

const GrayIc = '#b6b6b6';
const menuIc = { s: 28, c: '#444' };

export default function App() {
  return (
    <Root>
      <Global />
      <TitleBar>
        <Loader /><LoaderRest />
        <LogoMark />
        <AppName>Wondershare EdrawMax</AppName>
        <ProBadge>Pro</ProBadge>
        <ActiveTab>
          <TabLogo />
          <TabName>kitchen-layout-ex...</TabName>
          <TabDot />
        </ActiveTab>
        <NewTab><ITabPlus s={24} c="#333" sw={1.600} /></NewTab>
        <WindowTools>
          <Avatar />
          <WinBtn $ml={46}><IMin s={22} c="#333" sw={1.700} /></WinBtn>
          <WinBtn $ml={40}><IRestore s={26} c="#333" sw={1.700} /></WinBtn>
          <WinBtn $ml={41}><IX s={22} c="#333" sw={1.800} /></WinBtn>
        </WindowTools>
      </TitleBar>

      <MenuBar>
        <BarIcon $ml={33}><IBack s={14} h={28} c="#444" sw={2} /></BarIcon>
        <FileBtn><IBurger s={24} c="#333" sw={1.600} /><span>File</span></FileBtn>
        <VSep $ml={24} />
        <BarIcon $ml={40}><IUndo s={24} c="#a8a8a8" sw={2} /></BarIcon>
        <BarIcon $ml={16}><Caret $c="#aaa" /></BarIcon>
        <BarIcon $ml={34}><IRedo s={25} c="#333" sw={2} /></BarIcon>
        <BarIcon $ml={38}><ISaveBar s={26} h={28} c="#333" sw={2} /></BarIcon>
        <BarIcon $ml={36}><IPrint s={31} c="#333" sw={1.800} /></BarIcon>
        <BarIcon $ml={38}><IExport s={28} c="#333" sw={1.800} /></BarIcon>
        <BarIcon $ml={14}><Caret /></BarIcon>
        <BarIcon $ml={40}><IMore s={14} h={18} c="#333" sw={2} /></BarIcon>
        <VSep $ml={40} />
        <Tabs>
          {tabs.map(t => <TabItem key={t} $on={t === 'Home'}>{t}</TabItem>)}
          <TabItem>AI<HotBadge>hot</HotBadge></TabItem>
        </Tabs>
        <MenuRight>
          <RightTool $gap={7}><IPlane s={26} h={30} c="#333" sw={1.500} /><span>Publish</span></RightTool>
          <RightTool $gap={6} $ml={18}><IShare s={29} c="#333" sw={1.500} /><span>Share</span></RightTool>
          <RightTool $gap={6} $ml={27}><IGear s={28} c="#333" sw={1.500} /><span>Options</span></RightTool>
          <HelpWrap><IHelp s={29} c="#333" sw={1.500} /><Caret /><HelpDot /></HelpWrap>
          <BarIcon $ml={37}><IUp s={20} h={18} c="#333" sw={1.700} /></BarIcon>
        </MenuRight>
        <RedBox $l={1975} $t={-5} $w={273} $h={75} />
      </MenuBar>

      <Ribbon>
        <Group $w={171}>
          <GroupBody $grid $cols="1fr" $pl={31}>
            <Cell><RCut s={32} h={32} c={GrayIc} /></Cell>
            <Cell><RCopy s={31} h={32} c={GrayIc} /></Cell>
          </GroupBody>
          <GroupFoot><FootLabel>Clipboard</FootLabel></GroupFoot>
        </Group>
        <Group $w={749}>
          <GroupBody>
            <FontRow>
              <FieldBox $w={372}><span /><Caret $c="#555" /></FieldBox>
              <FieldBox $w={127} $ml={16}><span>28</span><Caret $c="#777" /></FieldBox>
              <Slot $ml={24}><BumpA>A<BumpSign>+</BumpSign></BumpA></Slot>
              <Slot $ml={31}><BumpA>A<BumpSign>-</BumpSign></BumpA></Slot>
              <Slot $ml={33}><RAlign s={28} h={22} c="#444" /><Caret $ml={10} /></Slot>
            </FontRow>
            <FontRow>
              <Slot $ml={339}><SubX>X₂</SubX></Slot>
              <Slot $ml={28}><RTArc s={24} h={30} c={GrayIc} /></Slot>
              <Slot $ml={12}><Caret $c="#aaa" /></Slot>
              <Slot $ml={18}><RSpacing s={36} h={28} c="#444" /><Caret $ml={7} /></Slot>
              <Slot $ml={23}><RList s={32} h={26} c={GrayIc} /><Caret $ml={8} $c="#aaa" /></Slot>
              <Slot $ml={22}><AbText>ab</AbText><Caret $ml={7} /></Slot>
              <Slot $ml={23}><ColorA>A</ColorA><Caret $ml={7} /></Slot>
            </FontRow>
          </GroupBody>
          <GroupFoot $pr={24}><FootLabel>Font and Alignment</FootLabel><FootAction><RLaunch s={15} h={17} c="#444" sw={2.600} /></FootAction></GroupFoot>
        </Group>
        <Group $w={417}>
          <GroupBody $grid $cols="150px auto" $pl={24} $cg={20}>
            <Cell $pl={11} $bg="#f4f5f5" $gap={10}><RSelect s={35} h={36} c="#333" /><span>Select</span><Caret $ml={8} /></Cell>
            <Cell $pl={11}><RShape s={32} c="#333" /><span>Shape</span><Caret $ml={8} /></Cell>
            <Cell $pl={11} $gap={10}><RText s={35} c="#333" /><span>Text</span><Caret $ml={6} /></Cell>
            <Cell $pl={8} $gap={11}><RConnector s={36} c="#333" /><span>Connector</span><Caret $ml={8} /></Cell>
          </GroupBody>
          <GroupFoot><FootLabel>Tools</FootLabel></GroupFoot>
        </Group>
        <Group $w={328}>
          <StylesBody>
            <QuickCol>
              <QuickIcon><RQuick s={34} h={33} c={GrayIc} /></QuickIcon>
              <QuickLine $pl={12}>Quick</QuickLine>
              <QuickLine $pl={19} $gap={23}>Style<Caret $c="#aaa" /></QuickLine>
            </QuickCol>
            <StyleColumn>
              <StyleRow><StyleIcons><RFill s={26} h={29} c={GrayIc} /></StyleIcons><span>Fill</span><Caret $c="#aaa" /></StyleRow>
              <StyleRow><StyleIcons><RLine s={25} h={25} c={GrayIc} /></StyleIcons><span>Line</span><Caret $c="#aaa" /></StyleRow>
              <StyleRow><StyleIcons><RShadow s={25} c={GrayIc} /></StyleIcons><span>Shadow</span><Caret $c="#aaa" /></StyleRow>
            </StyleColumn>
          </StylesBody>
          <GroupFoot $pl={29} $pr={25}><FootLabel>Styles</FootLabel><FootAction><RLaunch s={15} h={17} c="#444" sw={2.600} /></FootAction></GroupFoot>
        </Group>
        <Group $w={561}>
          <GroupBody $grid $cols="186px 168px auto" $pl={36}>
            <Cell $off><RPosition s={34} c={GrayIc} /><span>Position</span><Caret $c="#aaa" $ml={4} /></Cell>
            <Cell $off $gap={10}><RGroup s={35} c={GrayIc} /><span>Group</span><Caret $c="#aaa" $ml={4} /></Cell>
            <Cell $off $gap={9}><RRotate s={37} h={36} c={GrayIc} /><span>Rotate</span><Caret $c="#aaa" $ml={4} /></Cell>
            <Cell $off $pl={3} $gap={13}><RAlignL s={28} h={36} c={GrayIc} /><span>Align</span><Caret $c="#aaa" $ml={4} /></Cell>
            <Cell $off $gap={12}><RSize s={33} h={34} c={GrayIc} /><span>Size</span><Caret $c="#aaa" $ml={4} /></Cell>
            <Cell $off $pl={2} $gap={15}><RLock s={29} h={34} c={GrayIc} /><span>Lock</span><Caret $c="#aaa" $ml={6} /></Cell>
          </GroupBody>
          <GroupFoot><FootLabel>Arrangement</FootLabel></GroupFoot>
        </Group>
        <Group $w={198}>
          <QuickCol $w={197} $pl={0}>
            <QuickIcon $pl={84}><RReplace s={32} c={GrayIc} /></QuickIcon>
            <QuickLine $pl={56}>Replace</QuickLine>
            <QuickLine $pl={68} $gap={32}>Shape<Caret $c="#aaa" /></QuickLine>
          </QuickCol>
          <GroupFoot><FootLabel>Replace</FootLabel></GroupFoot>
        </Group>
      </Ribbon>

      <Main>
        <SideBar>
          <SideTop><SChevrons s={28} h={24} c="#444" /></SideTop>
          <SideItem><SideTile><STemplate s={32} c="#444" /></SideTile><SideLabel>Templates</SideLabel></SideItem>
          <SideItem><SideTile><SSymbol s={32} c="#444" /></SideTile><SideLabel>Symbols</SideLabel></SideItem>
          <SideItem $on><SideTile $on><SText s={32} c="#0e7cf6" /></SideTile><SideLabel>Text</SideLabel></SideItem>
          <SideItem><SideTile><SImage s={32} c="#444" /></SideTile><SideLabel>Images</SideLabel></SideItem>
          <SideItem><SideTile><SIcons s={32} c="#444" /></SideTile><SideLabel>Icons</SideLabel></SideItem>
          <SideItem><SideTile><SStickers s={36} c="#444" /></SideTile><SideLabel>Stickers</SideLabel></SideItem>
          <SideItem><SideTile><SCharts s={34} c="#444" /></SideTile><SideLabel>Charts</SideLabel></SideItem>
          <SideItem><SideTile><SWidgets s={34} c="#444" /></SideTile><SideLabel>Widgets</SideLabel></SideItem>
        </SideBar>
        <Center>
          <TopRuler><TopTicks /></TopRuler>
          <CanvasRow>
            <LeftRuler><LeftTicks /></LeftRuler>
            <GrayPad $w={387} />
            <PageBox><FloorPlan /></PageBox>
            <GrayPad $w={551}>
              <FloatPill><Wand /><PillSep /><Sparkle /></FloatPill>
            </GrayPad>
            <VScrollTrack><VThumb /></VScrollTrack>
          </CanvasRow>
          <HScrollTrack><HThumb /></HScrollTrack>
          <ColorStrip>
            <PaintBtn><PaintIcon /><Caret /></PaintBtn>
            <Swatches>{colors.map((c, i) => <Swatch key={i} $c={c} />)}</Swatches>
          </ColorStrip>
        </Center>
        <RightPanel>
          <RightIcon $h={64}><SLeftChev s={25} h={24} c="#444" /></RightIcon>
          <RightIcon $h={68} $bg="#0a80ff"><SFill s={36} h={38} c="#fff" /></RightIcon>
          <RightIcon $h={36} $mt={38}><SDoc s={32} h={36} c="#444" /></RightIcon>
          <RightIcon $h={36} $mt={53}><IHelp s={36} c="#444" sw={2} /></RightIcon>
          <RightIcon $h={36} $mt={695}><IGear s={34} c="#444" sw={2.200} /></RightIcon>
        </RightPanel>
      </Main>

      <StatusBar>
        <StatusCell $w={97} $jc="center" $pl={9}><TPanel s={36} h={20} c="#333" /></StatusCell>
        <StatusCell $w={256} $pl={32}><span>Page-1</span><Caret $ml={130} $c="#777" /></StatusCell>
        <StatusCell $w={81} $jc="center"><IPlus s={24} c="#333" sw={1.600} /></StatusCell>
        <StatusCell $w={145} $pl={34} $c="#0e7cf6" $bold>Page-1</StatusCell>
        <StatusGrow />
        <StatusCell $w={286} $pl={18} $lb>Number of shapes: 14.5</StatusCell>
        <StatusCell $w={298} $bare $pl={23}>
          <TLayers s={35} h={30} c="#333" /><Caret $ml={11} />
          <BarIcon $ml={31}><TFocus s={28} c="#333" /></BarIcon>
          <BarIcon $ml={19}>Focus</BarIcon>
          <BarIcon $ml={23}><TPlay s={32} c="#333" /></BarIcon>
        </StatusCell>
        <StatusCell $w={425} $pl={21} $lb>
          <IMin s={23} c="#333" sw={1.700} />
          <SliderTrack><SliderFill style={{ width: 54 }} /><SliderKnob style={{ left: 42 }} /></SliderTrack>
          <BarIcon $ml={23}><IPlus s={23} c="#333" sw={1.600} /></BarIcon>
          <BarIcon $ml={25}>107%</BarIcon>
          <Caret $ml={10} $c="#777" />
        </StatusCell>
        <StatusCell $w={160} $bare $pl={26}>
          <TFit s={28} c="#333" />
          <BarIcon $ml={35}><TWidth s={28} c="#333" /></BarIcon>
        </StatusCell>
      </StatusBar>
      <TaskStrip />

      <FileMenu>
        <MenuRow $pr={25}><MNew {...menuIc} /><span>New</span><MenuArrow /></MenuRow>
        <MenuRow><MOpen {...menuIc} /><span>Open</span></MenuRow>
        <MenuRow><MImport {...menuIc} /><span>Import</span></MenuRow>
        <MenuSep><MenuSepLine /></MenuSep>
        <MenuRow><MSave {...menuIc} /><span>Save</span></MenuRow>
        <MenuRow><MSaveAs {...menuIc} /><span>Save As</span></MenuRow>
        <MenuRow><MGraph {...menuIc} /><span>Export to Graphics</span></MenuRow>
        <MenuRow><MPdf {...menuIc} /><span>Export to PDF</span></MenuRow>
        <MenuRow $on $pr={25}><MOther {...menuIc} /><span>Export to Other Formats</span><MenuArrow /></MenuRow>
        <MenuRow><MPrint {...menuIc} /><span>Print</span></MenuRow>
        <MenuSep><MenuSepLine /></MenuSep>
        <MenuRow><IShare {...menuIc} /><span>Share</span></MenuRow>
        <MenuRow><IPlane {...menuIc} /><span>Publish</span></MenuRow>
        <MenuSep><MenuSepLine /></MenuSep>
        <MenuRow><IGear {...menuIc} /><span>Options</span></MenuRow>
      </FileMenu>
      <SubMenu>
        {subs.map(([name, l, a, b, badge, fold]) => (
          <SubRow key={name}><FileIcon id={'f' + l} letter={l} a={a} b={b} badge={badge} fold={fold} /><span>{name}</span></SubRow>
        ))}
      </SubMenu>
    </Root>
  );
}
